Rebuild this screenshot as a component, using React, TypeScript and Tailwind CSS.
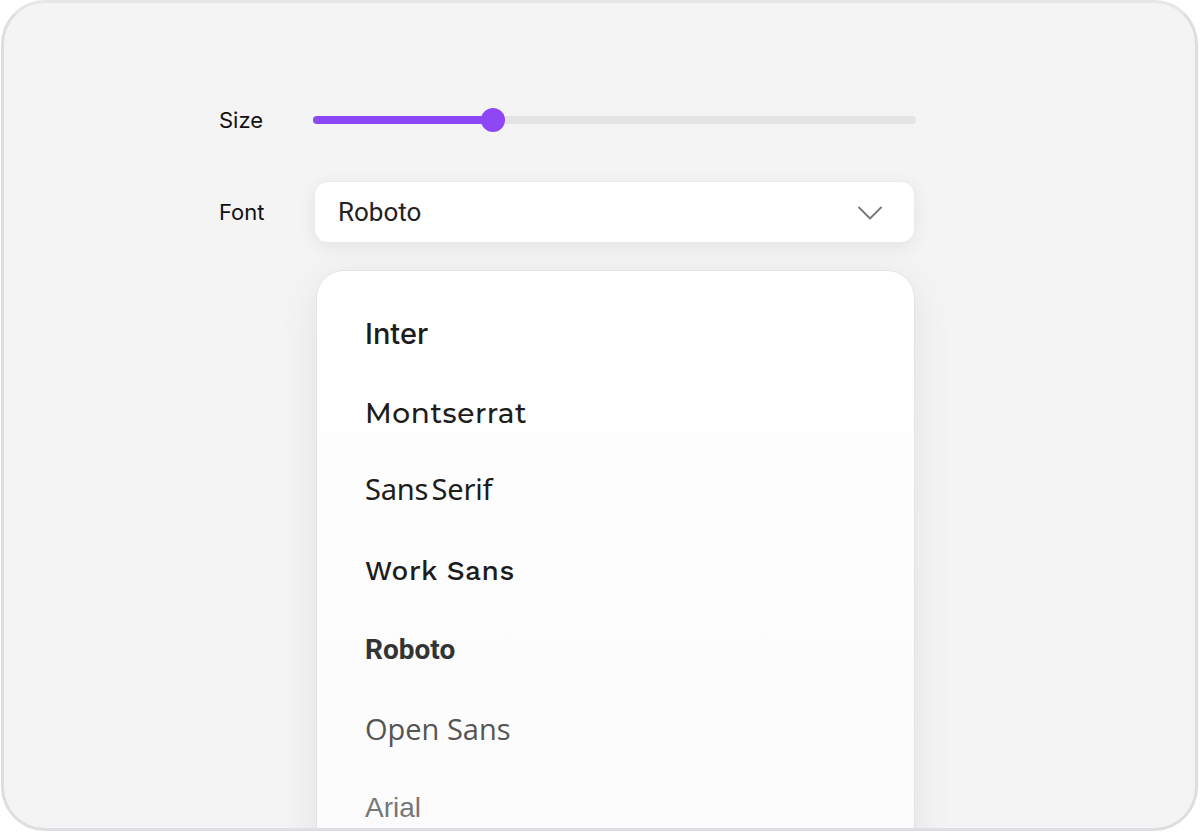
const fonts = [
  { name: 'Inter', cls: "font-['Inter',sans-serif] text-[29px] font-medium text-[#1c1c1c]" },
  { name: 'Montserrat', cls: "font-['Montserrat','DejaVu_Sans',sans-serif] text-[28px] font-medium text-[#1c1c1c] tracking-[0.6px]" },
  { name: 'Sans Serif', cls: "font-['Noto_Sans',sans-serif] text-[29px] font-normal text-[#1c1c1c] tracking-[-0.2px] [word-spacing:-4px] pb-[6px]" },
  { name: 'Work Sans', cls: "font-['Work_Sans','Open_Sans',sans-serif] text-[28px] font-medium text-[#1c1c1c] tracking-[0.5px]" },
  { name: 'Roboto', cls: "font-['Roboto',sans-serif] text-[28px] font-bold text-[#333333]" },
  { name: 'Open Sans', cls: "font-['Open_Sans',sans-serif] text-[29px] font-normal text-[#555555]" },
  { name: 'Arial', cls: "font-['Liberation_Sans',Arial,sans-serif] text-[28px] font-normal text-[#777777]" },
];

function Slider({ value }: { value: number }) {
  return (
    <div className="relative h-6 w-full flex items-center">
      <div className="h-2 w-full rounded-full bg-[#e4e4e7]" />
      <div className="absolute left-0 h-2 rounded-full bg-[#8d47f4]" style={{ width: `${value}%` }} />
      <div
        className="absolute w-6 h-6 rounded-full bg-[#8d47f4] -translate-x-1/2"
        style={{ left: `${value}%` }}
      />
    </div>
  );
}

export default function App() {
  return (
    <div className="w-[1200px] h-[833px] bg-white overflow-hidden font-['Inter',sans-serif]">
      <div className="ml-[1px] w-[1197px] h-[831px] rounded-[44px] border-[3px] border-[#dedee2] border-t-[#e6e6e9] bg-[#f4f4f4] pt-[105px] pl-[215px] overflow-hidden">
        <div className="flex items-center h-6">
          <span className="w-[94px] text-[22px] leading-none text-[#111111]">Size</span>
          <div className="w-[603px]">
            <Slider value={29.9} />
          </div>
        </div>

        <div className="flex items-center mt-[49px]">
          <span className="w-[95px] text-[22px] leading-none text-[#111111]">Font</span>
          <div className="w-[601px] h-[62px] rounded-[14px] bg-white border border-[#ebebeb] shadow-[0_4px_18px_rgba(0,0,0,0.07)] flex items-center justify-between pl-[23px] pr-[32px]">
            <span className="font-['Roboto',sans-serif] text-[26px] text-[#222222]">Roboto</span>
            <svg width="24" height="14" viewBox="0 0 24 14" fill="none" className="mt-[1px]">
              <path d="M1 1.5 L12 12.5 L23 1.5" stroke="#777777" strokeWidth="1.8" strokeLinecap="round" strokeLinejoin="round" />
            </svg>
          </div>
        </div>

        <div className="ml-[97px] mt-[27px] w-[599px] h-[600px] rounded-[28px] border-[1.5px] border-[#e3e3e3] bg-gradient-to-b from-white to-[#fbfbfb] shadow-[0_10px_40px_rgba(0,0,0,0.08)] pt-[23px] pl-[48px]">
          {fonts.map((f) => (
            <div key={f.name} className="h-[79px] flex items-center">
              <span className={f.cls}>{f.name}</span>
            </div>
          ))}
        </div>
      </div>
    </div>
  );
}
